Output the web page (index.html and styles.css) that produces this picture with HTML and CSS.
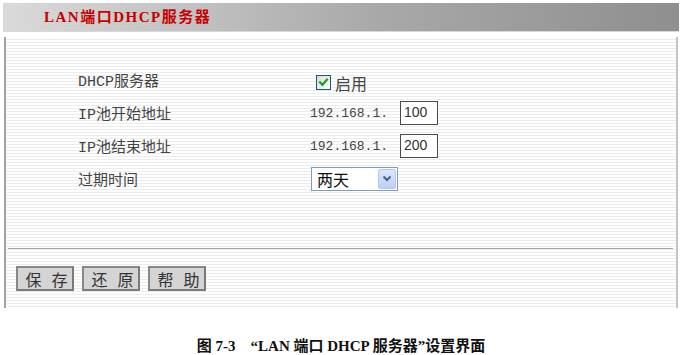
FILE: index.html
```html
<!DOCTYPE html>
<html lang="zh-CN">
<head>
<meta charset="utf-8">
<title>LAN端口DHCP服务器</title>
<link rel="stylesheet" href="styles.css">
</head>
<body>
<div class="page">
  <div class="titlebar"><h1 class="title">LAN端口DHCP服务器</h1></div>
  <div class="panel">
    <div class="form">
      <div class="label">DHCP服务器</div>
      <div class="value">
        <span class="checkbox"><svg width="11" height="11" viewBox="0 0 11 11"><path d="M2 5.2 L4.4 7.8 L9 2.6" fill="none" stroke="#21a121" stroke-width="2.2" stroke-linecap="square"/></svg></span>
        <span class="cb-text">启用</span>
      </div>
      <div class="label">IP池开始地址</div>
      <div class="value"><span class="ip">192.168.1.</span><span class="box">100</span></div>
      <div class="label">IP池结束地址</div>
      <div class="value"><span class="ip">192.168.1.</span><span class="box">200</span></div>
      <div class="label">过期时间</div>
      <div class="value">
        <span class="select"><span class="sel-text">两天</span><span class="sel-btn"><svg width="10" height="7" viewBox="0 0 10 7"><path d="M1.5 1.5 L5 5 L8.5 1.5" fill="none" stroke="#4d6185" stroke-width="2"/></svg></span></span>
      </div>
    </div>
    <div class="sep"></div>
    <div class="buttons">
      <span class="btn"><span>保</span><span>存</span></span>
      <span class="btn"><span>还</span><span>原</span></span>
      <span class="btn"><span>帮</span><span>助</span></span>
    </div>
  </div>
  <p class="caption">图 7-3&emsp;“LAN 端口 DHCP 服务器”设置界面</p>
</div>
</body>
</html>
```

FILE: styles.css
```css
* { box-sizing: border-box; }
body { margin: 0; background: #fff; }
.page { padding: 3px 3px 0 3px; width: 682px; }
.titlebar {
  height: 29px;
  background: linear-gradient(to right, #dadada 0%, #c4c4c4 25%, #a9a9a9 55%, #8f8f8f 100%);
  display: flex;
  align-items: center;
  padding-left: 41px;
  border-bottom: 1px solid #d8d8d8;
}
.title {
  margin: 0;
  font-family: "Liberation Serif", "Noto Sans CJK SC", serif;
  font-size: 15px;
  font-weight: bold;
  color: #c80000;
  letter-spacing: 1.5px;
  line-height: 1;
}
.panel {
  margin: 5px 1px 0 1px;
  height: 271px;
  border-left: 2px solid #a3a3a3;
  border-right: 2px solid #c4c4c4;
  background: repeating-linear-gradient(to bottom, #ffffff 0, #ffffff 2px, #ececec 2px, #ececec 3px);
  padding-top: 26px;
}
.form {
  display: grid;
  grid-template-columns: 232px 1fr;
  grid-auto-rows: 33px;
  align-items: center;
  padding-left: 72px;
}
.label {
  font-family: "Liberation Mono", "Noto Sans CJK SC", monospace;
  font-size: 15px;
  color: #444;
}
.value { display: flex; align-items: center; }
.checkbox {
  width: 15px; height: 15px;
  margin-left: 6px;
  margin-top: 5px;
  border: 1px solid #1c5180;
  background: linear-gradient(135deg, #dcdcd6, #ffffff);
  display: flex; align-items: center; justify-content: center;
}
.cb-text {
  margin-left: 4px;
  margin-top: 6px;
  font-family: "Noto Sans CJK SC", sans-serif;
  font-size: 16px;
  color: #444;
}
.ip {
  font-family: "Liberation Mono", monospace;
  font-size: 13px;
  color: #444;
  width: 90px;
  margin-top: 2px;
}
.box {
  width: 38px; height: 24px;
  border: 1px solid #4a4a4a;
  background: #fff;
  font-family: "Liberation Sans", Arial, sans-serif;
  font-size: 14px;
  color: #333;
  padding: 1px 0 0 3px;
  line-height: 18px;
}
.select {
  width: 87px; height: 24px;
  border: 1px solid #7f9db9;
  background: #fff;
  display: flex; align-items: center;
  justify-content: space-between;
  padding: 1px;
  margin-left: 1px;
}
.sel-text {
  font-family: "Noto Sans CJK SC", sans-serif;
  font-size: 16px;
  color: #111;
  padding-left: 4px;
}
.sel-btn {
  width: 18px; height: 20px;
  background: linear-gradient(to bottom, #dbe6fd, #bccff8);
  border: 1px solid #b6c8f1;
  border-radius: 2px;
  display: flex; align-items: center; justify-content: center;
}
.sep {
  margin: 53px 3px 0 2px;
  height: 1px;
  background: #a6a6a6;
}
.buttons {
  display: flex;
  gap: 8px;
  margin-top: 17px;
  padding-left: 10px;
}
.btn {
  width: 58px; height: 25px;
  background: #d4d4d4;
  border: 2px solid #7a7a7a;
  border-top-color: #888;
  border-left-color: #888;
  display: flex; align-items: center; justify-content: center;
  gap: 10px;
  padding-left: 3px;
  font-family: "Noto Sans CJK SC", sans-serif;
  font-size: 16px;
  color: #333;
  white-space: nowrap;
}
.caption {
  margin: 28px 0 0 0;
  text-align: center;
  font-family: "Liberation Serif", "Noto Sans CJK SC", serif;
  font-size: 15px;
  font-weight: bold;
  color: #111;
  line-height: 20px;
}
```
